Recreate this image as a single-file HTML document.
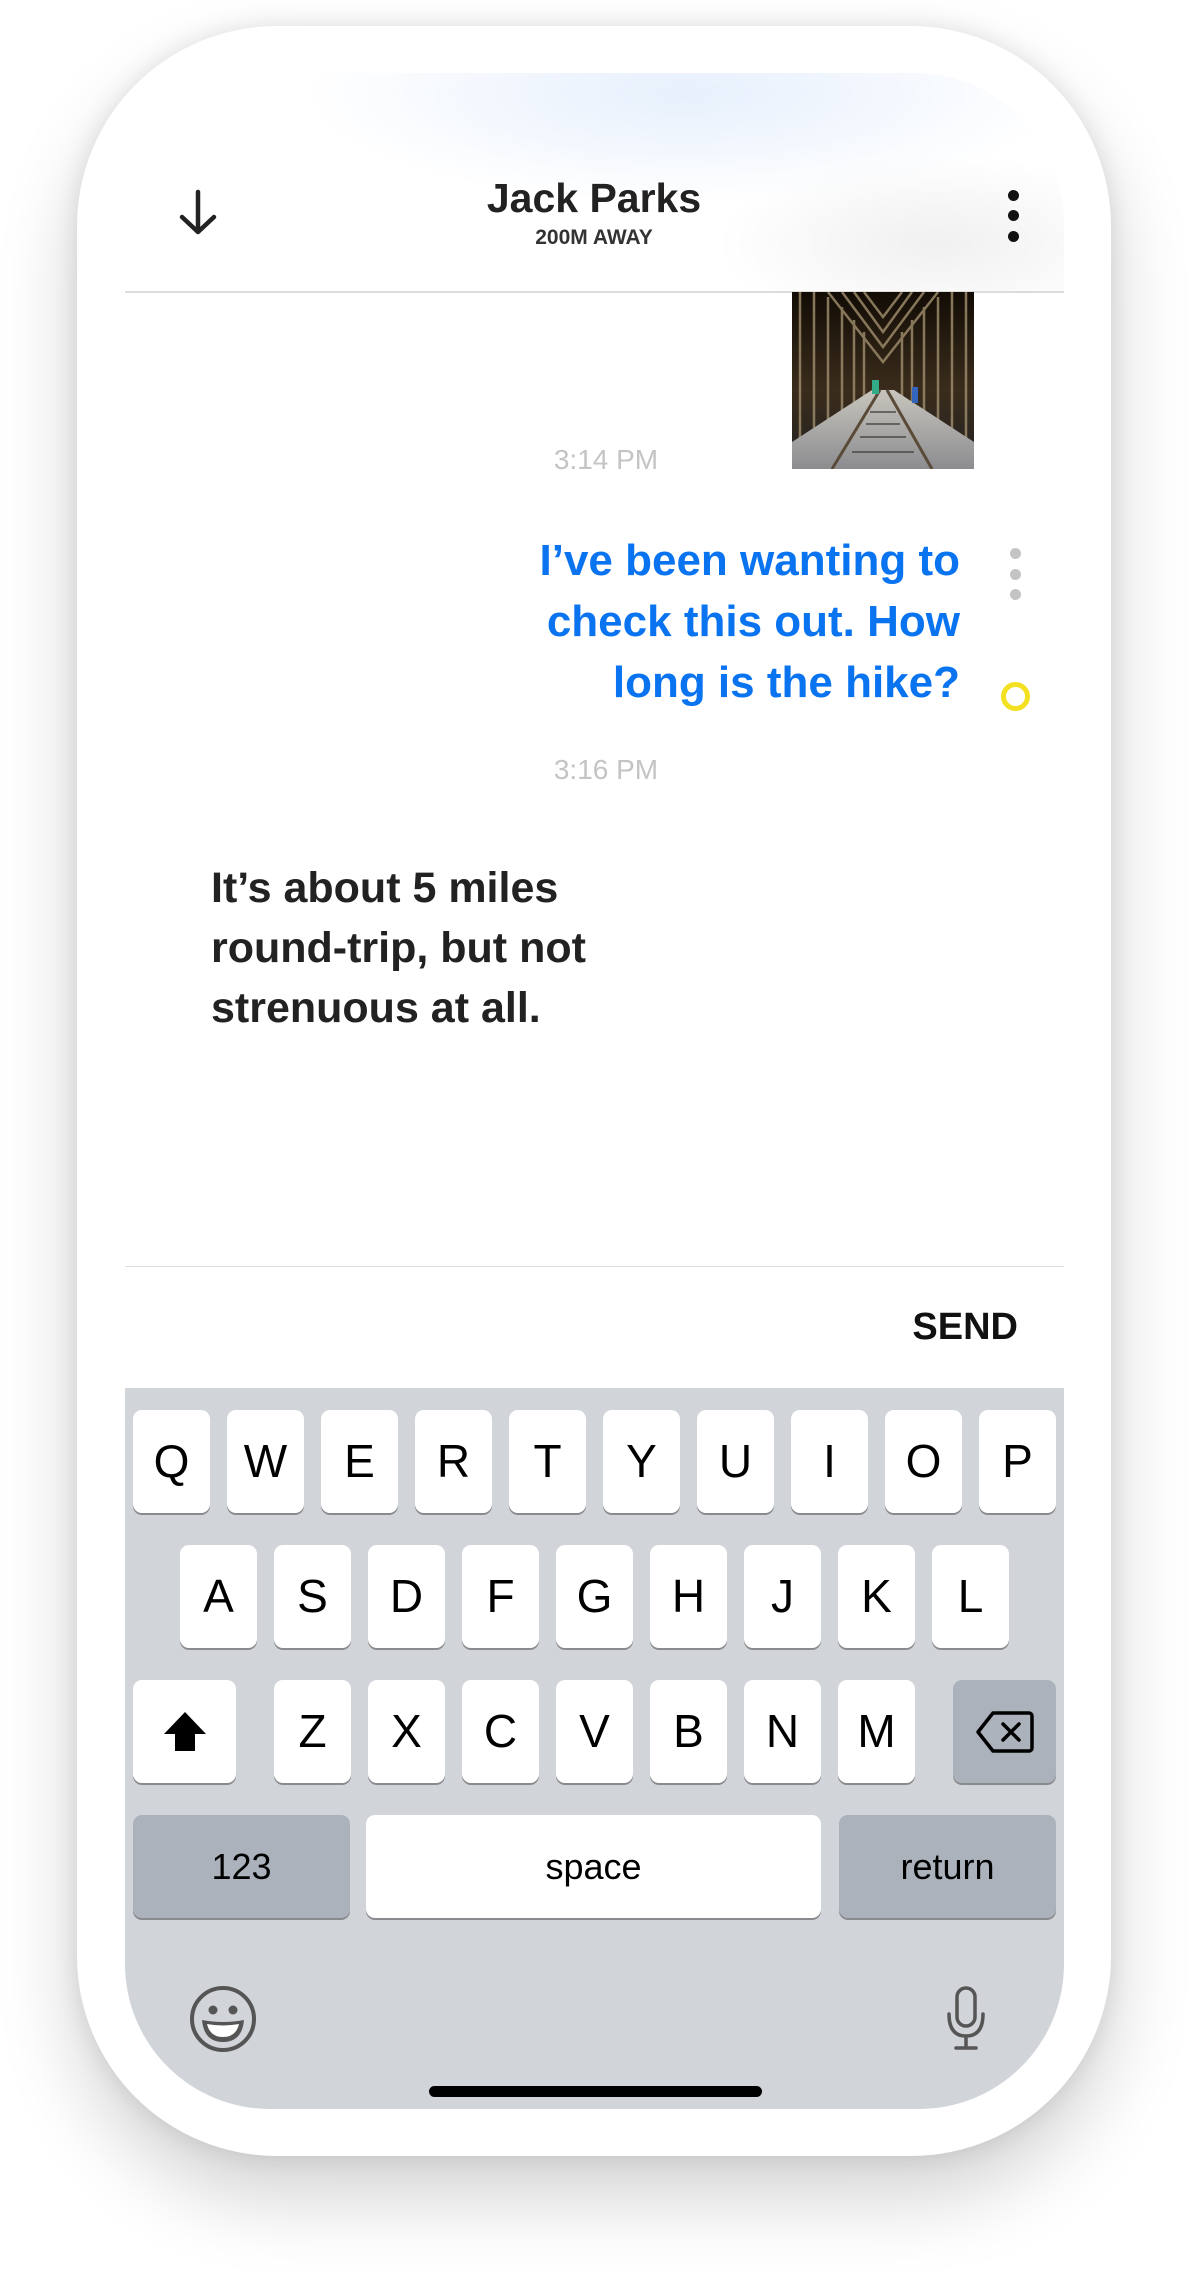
<!DOCTYPE html>
<html><head><meta charset="utf-8"><style>
*{margin:0;padding:0;box-sizing:border-box}
html,body{width:1188px;height:2283px;background:#fff;overflow:hidden;font-family:"Liberation Sans",sans-serif}
.phone{position:absolute;left:77px;top:26px;width:1034px;height:2130px;border-radius:200px;background:#fff;box-shadow:0 40px 80px rgba(0,0,0,0.18),0 0 24px rgba(0,0,0,0.10)}
.screen{position:absolute;left:125px;top:73px;width:939px;height:2036px;border-radius:150px 150px 145px 145px;background:#fff;overflow:hidden}
.hdrbg{position:absolute;left:0;top:0;width:939px;height:219px;background:radial-gradient(ellipse 380px 110px at 560px 20px,rgba(228,238,252,0.9),rgba(255,255,255,0) 100%)}
.hdrsh{position:absolute;left:560px;top:80px;width:380px;height:140px;background:radial-gradient(ellipse 220px 90px at 250px 90px,rgba(0,0,0,0.06),rgba(0,0,0,0) 100%)}
.abs{position:absolute}
.title{left:0;width:1188px;text-align:center;position:absolute}
.key{position:absolute;width:77px;height:103px;background:#fff;border-radius:9px;box-shadow:0 2px 0 #898a8d;font-size:46px;color:#000;text-align:center;line-height:103px}
.dk{background:#abb2bb}
.blue{color:#0a74f0;font-weight:bold;font-size:44px;line-height:61px;text-align:right}
</style></head><body>
<div class="phone"></div>
<div class="screen">
 <div class="hdrbg"></div>
 <div class="hdrsh"></div>
 <div class="abs" style="left:0;top:218px;width:939px;height:2px;background:#dcdcdc"></div>
 <div class="abs" style="left:0;top:1193px;width:939px;height:1px;background:#dedede"></div>
 <div class="abs" style="left:0;top:1315px;width:939px;height:721px;background:#d1d4d9"></div>
</div>
<svg class="abs" style="left:176px;top:186px" width="44" height="52" viewBox="0 0 44 52"><path d="M22 6 V46 M6 31 L22 46 L38 31" fill="none" stroke="#222" stroke-width="4.5" stroke-linecap="round" stroke-linejoin="round"/></svg>
<div class="title" style="top:175px;font-size:41px;font-weight:bold;color:#222">Jack Parks</div>
<div class="title" style="top:226px;font-size:21px;font-weight:bold;color:#333">200M AWAY</div>
<div class="abs" style="left:1008px;top:190px;width:11px;height:11px;border-radius:50%;background:#111"></div>
<div class="abs" style="left:1008px;top:210px;width:11px;height:11px;border-radius:50%;background:#111"></div>
<div class="abs" style="left:1008px;top:231px;width:11px;height:11px;border-radius:50%;background:#111"></div>
<svg class="abs" style="left:792px;top:292px" width="182" height="177" viewBox="0 0 182 177">
<defs><linearGradient id="g" x1="0" y1="0" x2="0" y2="1"><stop offset="0" stop-color="#120c05"/><stop offset="0.55" stop-color="#3a2c1c"/><stop offset="1" stop-color="#222"/></linearGradient>
<linearGradient id="f" x1="0" y1="0" x2="0" y2="1"><stop offset="0" stop-color="#c8c5bd"/><stop offset="1" stop-color="#8c8c90"/></linearGradient></defs>
<rect width="182" height="177" fill="url(#g)"/>
<g stroke="#9a8868" stroke-width="2.5" fill="none" opacity="0.85">
<path d="M8 0 V155 M22 0 V148 M36 5 V138 M50 15 V128 M62 28 V120 M72 40 V112 M174 0 V155 M160 0 V148 M146 5 V138 M132 15 V128 M120 28 V120 M110 40 V112"/>
<path d="M36 0 L91 70 L146 0 M50 0 L91 55 L132 0 M62 0 L91 40 L120 0 M72 0 L91 25 L110 0"/>
</g>
<path d="M0 177 L0 150 L80 98 L102 98 L182 150 L182 177Z" fill="url(#f)"/>
<path d="M40 177 L88 98 M140 177 L95 98" stroke="#5a4a38" stroke-width="3"/>
<g stroke="#333" stroke-width="2" opacity="0.6"><path d="M60 160 H122 M68 145 H114 M74 132 H108 M78 120 H104"/></g>
<rect x="80" y="88" width="7" height="14" fill="#3a8"/><rect x="120" y="95" width="6" height="16" fill="#36b"/>
</svg>
<div class="abs" style="left:506px;top:444px;width:200px;text-align:center;font-size:28px;color:#c4c4c4">3:14 PM</div>
<div class="abs blue" style="left:420px;top:530px;width:540px">I’ve been wanting to<br>check this out. How<br>long is the hike?</div>
<div class="abs" style="left:1010px;top:548px;width:11px;height:11px;border-radius:50%;background:#c4c4c4"></div>
<div class="abs" style="left:1010px;top:569px;width:11px;height:11px;border-radius:50%;background:#c4c4c4"></div>
<div class="abs" style="left:1010px;top:589px;width:11px;height:11px;border-radius:50%;background:#c4c4c4"></div>
<div class="abs" style="left:1001px;top:682px;width:29px;height:29px;border-radius:50%;border:5px solid #f3e020"></div>
<div class="abs" style="left:506px;top:754px;width:200px;text-align:center;font-size:28px;color:#c4c4c4">3:16 PM</div>
<div class="abs" style="left:211px;top:858px;font-size:43px;line-height:60px;font-weight:bold;color:#222">It’s about 5 miles<br>round-trip, but not<br>strenuous at all.</div>
<div class="abs" style="left:880px;top:1306px;width:138px;text-align:right;font-size:38px;font-weight:bold;color:#111">SEND</div>
<div class="key" style="left:133px;top:1410px">Q</div><div class="key" style="left:227px;top:1410px">W</div><div class="key" style="left:321px;top:1410px">E</div><div class="key" style="left:415px;top:1410px">R</div><div class="key" style="left:509px;top:1410px">T</div><div class="key" style="left:603px;top:1410px">Y</div><div class="key" style="left:697px;top:1410px">U</div><div class="key" style="left:791px;top:1410px">I</div><div class="key" style="left:885px;top:1410px">O</div><div class="key" style="left:979px;top:1410px">P</div>
<div class="key" style="left:180px;top:1545px">A</div><div class="key" style="left:274px;top:1545px">S</div><div class="key" style="left:368px;top:1545px">D</div><div class="key" style="left:462px;top:1545px">F</div><div class="key" style="left:556px;top:1545px">G</div><div class="key" style="left:650px;top:1545px">H</div><div class="key" style="left:744px;top:1545px">J</div><div class="key" style="left:838px;top:1545px">K</div><div class="key" style="left:932px;top:1545px">L</div>
<div class="key" style="left:133px;top:1680px;width:103px"><svg width="50" height="50" viewBox="0 0 50 50" style="margin-top:27px"><path d="M25 5 L46 27 H35 V44 H15 V27 H4Z" fill="#000"/></svg></div>
<div class="key" style="left:274px;top:1680px">Z</div><div class="key" style="left:368px;top:1680px">X</div><div class="key" style="left:462px;top:1680px">C</div><div class="key" style="left:556px;top:1680px">V</div><div class="key" style="left:650px;top:1680px">B</div><div class="key" style="left:744px;top:1680px">N</div><div class="key" style="left:838px;top:1680px">M</div>
<div class="key dk" style="left:953px;top:1680px;width:103px"><svg width="60" height="44" viewBox="0 0 60 44" style="margin-top:30px"><path d="M18 3 H54 a3 3 0 0 1 3 3 V38 a3 3 0 0 1 -3 3 H18 L3 22Z" fill="none" stroke="#000" stroke-width="3.5" stroke-linejoin="round"/><path d="M28 14 L44 30 M44 14 L28 30" stroke="#000" stroke-width="3.5" stroke-linecap="round"/></svg></div>
<div class="key dk" style="left:133px;top:1815px;width:217px;font-size:36px">123</div>
<div class="key" style="left:366px;top:1815px;width:455px;font-size:36px">space</div>
<div class="key dk" style="left:839px;top:1815px;width:217px;font-size:36px">return</div>
<svg class="abs" style="left:188px;top:1984px" width="70" height="70" viewBox="0 0 70 70"><circle cx="35" cy="35" r="31" fill="none" stroke="#555" stroke-width="4"/><circle cx="25" cy="26" r="4.5" fill="#555"/><circle cx="45" cy="26" r="4.5" fill="#555"/><path d="M14 36 Q35 40 56 36 Q54 58 35 58 Q16 58 14 36Z" fill="#555"/><path d="M19 40 Q35 43 51 40 Q48 53 35 53 Q22 53 19 40Z" fill="#fff"/></svg>
<svg class="abs" style="left:944px;top:1986px" width="44" height="66" viewBox="0 0 44 66"><rect x="13" y="2" width="18" height="38" rx="9" fill="none" stroke="#555" stroke-width="3.5"/><path d="M5 28 Q5 50 22 50 Q39 50 39 28 M22 50 V62 M12 62 H32" fill="none" stroke="#555" stroke-width="3.5" stroke-linecap="round"/></svg>
<div class="abs" style="left:429px;top:2086px;width:333px;height:11px;border-radius:6px;background:#000"></div>
</body></html>
